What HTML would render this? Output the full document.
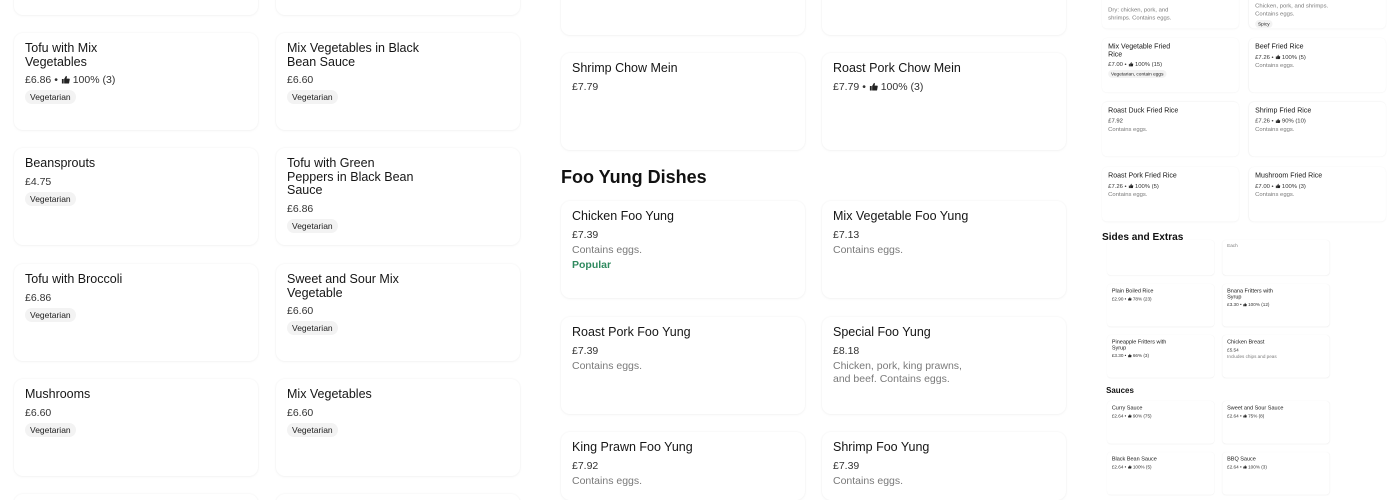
<!DOCTYPE html>
<html><head><meta charset="utf-8"><style>
*{margin:0;padding:0;box-sizing:border-box}
html{width:1400px;height:500px;overflow:hidden}
body{width:1400px;height:500px;overflow:hidden;background:#fff;font-family:"Liberation Sans",Arial,sans-serif;color:#141414;position:relative}
.c{position:absolute;width:244px;height:97px;border-radius:9px;background:#fff;box-shadow:0 0 2px rgba(0,0,0,.06),0 1px 3px rgba(0,0,0,.03);padding:9px 11px}
.t{font-size:12.5px;line-height:13.5px;white-space:nowrap;color:#161616}
.p{font-size:10.5px;line-height:12px;margin-top:5px;color:#333;white-space:nowrap}
.d{font-size:10.5px;line-height:13.5px;margin-top:3px;color:#7a7a7a;white-space:nowrap}
.pop{font-size:10.5px;line-height:13px;margin-top:2px;color:#2f8a5f;font-weight:bold}
.tag{display:inline-block;background:#f3f3f3;font-size:8.5px;line-height:10px;padding:2px 5px;border-radius:8px;margin-top:4px;color:#222}
.h{position:absolute;font-size:18px;font-weight:bold;color:#111;white-space:nowrap}
.th{display:inline-block;width:9px;height:9px;vertical-align:-1px}
.s1{position:absolute;left:1102px;top:38px;width:520px;height:400px;transform:scale(.561);transform-origin:0 0;z-index:2}
.s2{position:absolute;left:1107px;top:284px;width:520px;height:480px;transform:scale(.44);transform-origin:0 0;z-index:1}
</style></head><body>
<svg width="0" height="0" style="position:absolute"><defs><symbol id="up" viewBox="0 0 10 10"><path d="M1 4.5h2v5H1zM3.5 4.5L5.5 1c1 0 1.2.8 1 1.6L6.2 4H9c.5 0 .8.4.7.9L9 9c-.1.3-.4.5-.7.5H3.5z" fill="#222"/></symbol></defs></svg>

<!-- LEFT -->
<div class="c" style="left:14px;top:-82px"></div>
<div class="c" style="left:276px;top:-82px"></div>
<div class="c" style="left:14px;top:33px"><div class="t">Tofu with Mix<br>Vegetables</div><div class="p">£6.86 • <svg class="th"><use href="#up"/></svg> 100% (3)</div><div class="tag">Vegetarian</div></div>
<div class="c" style="left:276px;top:33px"><div class="t">Mix Vegetables in Black<br>Bean Sauce</div><div class="p">£6.60</div><div class="tag">Vegetarian</div></div>
<div class="c" style="left:14px;top:148px"><div class="t">Beansprouts</div><div class="p">£4.75</div><div class="tag">Vegetarian</div></div>
<div class="c" style="left:276px;top:148px"><div class="t">Tofu with Green<br>Peppers in Black Bean<br>Sauce</div><div class="p">£6.86</div><div class="tag">Vegetarian</div></div>
<div class="c" style="left:14px;top:264px"><div class="t">Tofu with Broccoli</div><div class="p">£6.86</div><div class="tag">Vegetarian</div></div>
<div class="c" style="left:276px;top:264px"><div class="t">Sweet and Sour Mix<br>Vegetable</div><div class="p">£6.60</div><div class="tag">Vegetarian</div></div>
<div class="c" style="left:14px;top:379px"><div class="t">Mushrooms</div><div class="p">£6.60</div><div class="tag">Vegetarian</div></div>
<div class="c" style="left:276px;top:379px"><div class="t">Mix Vegetables</div><div class="p">£6.60</div><div class="tag">Vegetarian</div></div>
<div class="c" style="left:14px;top:494px;height:6px"></div>
<div class="c" style="left:276px;top:494px;height:6px"></div>

<!-- MIDDLE -->
<div class="c" style="left:561px;top:-62px"></div>
<div class="c" style="left:822px;top:-62px"></div>
<div class="c" style="left:561px;top:53px"><div class="t">Shrimp Chow Mein</div><div class="p">£7.79</div></div>
<div class="c" style="left:822px;top:53px"><div class="t">Roast Pork Chow Mein</div><div class="p">£7.79 • <svg class="th"><use href="#up"/></svg> 100% (3)</div></div>
<div class="h" style="left:561px;top:167px">Foo Yung Dishes</div>
<div class="c" style="left:561px;top:201px"><div class="t">Chicken Foo Yung</div><div class="p">£7.39</div><div class="d">Contains eggs.</div><div class="pop">Popular</div></div>
<div class="c" style="left:822px;top:201px"><div class="t">Mix Vegetable Foo Yung</div><div class="p">£7.13</div><div class="d">Contains eggs.</div></div>
<div class="c" style="left:561px;top:317px"><div class="t">Roast Pork Foo Yung</div><div class="p">£7.39</div><div class="d">Contains eggs.</div></div>
<div class="c" style="left:822px;top:317px"><div class="t">Special Foo Yung</div><div class="p">£8.18</div><div class="d">Chicken, pork, king prawns,<br>and beef. Contains eggs.</div></div>
<div class="c" style="left:561px;top:432px;height:68px"><div class="t">King Prawn Foo Yung</div><div class="p">£7.92</div><div class="d">Contains eggs.</div></div>
<div class="c" style="left:822px;top:432px;height:68px"><div class="t">Shrimp Foo Yung</div><div class="p">£7.39</div><div class="d">Contains eggs.</div></div>

<!-- RIGHT upper (scaled) -->
<div class="s1">
<div class="c" style="left:0;top:-114px;padding-top:55px"><div class="d">Dry: chicken, pork, and<br>shrimps. Contains eggs.</div></div>
<div class="c" style="left:262px;top:-114px;padding-top:48px"><div class="d">Chicken, pork, and shrimps.<br>Contains eggs.</div><div class="tag">Spicy</div></div>
<div class="c" style="left:0;top:0"><div class="t">Mix Vegetable Fried<br>Rice</div><div class="p">£7.00 • <svg class="th"><use href="#up"/></svg> 100% (15)</div><div class="tag">Vegetarian, contain eggs</div></div>
<div class="c" style="left:262px;top:0"><div class="t">Beef Fried Rice</div><div class="p">£7.26 • <svg class="th"><use href="#up"/></svg> 100% (5)</div><div class="d">Contains eggs.</div></div>
<div class="c" style="left:0;top:114px"><div class="t">Roast Duck Fried Rice</div><div class="p">£7.92</div><div class="d">Contains eggs.</div></div>
<div class="c" style="left:262px;top:114px"><div class="t">Shrimp Fried Rice</div><div class="p">£7.26 • <svg class="th"><use href="#up"/></svg> 90% (10)</div><div class="d">Contains eggs.</div></div>
<div class="c" style="left:0;top:230px"><div class="t">Roast Pork Fried Rice</div><div class="p">£7.26 • <svg class="th"><use href="#up"/></svg> 100% (5)</div><div class="d">Contains eggs.</div></div>
<div class="c" style="left:262px;top:230px"><div class="t">Mushroom Fried Rice</div><div class="p">£7.00 • <svg class="th"><use href="#up"/></svg> 100% (3)</div><div class="d">Contains eggs.</div></div>
<div class="h" style="left:0;top:344px;background:#fff;padding-right:4px">Sides and Extras</div>
</div>

<!-- RIGHT lower (scaled) -->
<div class="s2">
<div class="c" style="left:0;top:-100px;height:80px"></div>
<div class="c" style="left:262px;top:-100px;height:80px;padding-top:4px"><div class="d">Each</div></div>
<div class="c" style="left:0;top:0"><div class="t">Plain Boiled Rice</div><div class="p">£2.90 • <svg class="th"><use href="#up"/></svg> 78% (23)</div></div>
<div class="c" style="left:262px;top:0"><div class="t">Bnana Fritters with<br>Syrup</div><div class="p">£3.30 • <svg class="th"><use href="#up"/></svg> 100% (12)</div></div>
<div class="c" style="left:0;top:116px"><div class="t">Pineapple Fritters with<br>Syrup</div><div class="p">£3.30 • <svg class="th"><use href="#up"/></svg> 66% (3)</div></div>
<div class="c" style="left:262px;top:116px"><div class="t">Chicken Breast</div><div class="p">£5.54</div><div class="d">Includes chips and peas</div></div>
<div class="h" style="left:-2px;top:232px">Sauces</div>
<div class="c" style="left:0;top:266px"><div class="t">Curry Sauce</div><div class="p">£2.64 • <svg class="th"><use href="#up"/></svg> 90% (75)</div></div>
<div class="c" style="left:262px;top:266px"><div class="t">Sweet and Sour Sauce</div><div class="p">£2.64 • <svg class="th"><use href="#up"/></svg> 75% (8)</div></div>
<div class="c" style="left:0;top:382px"><div class="t">Black Bean Sauce</div><div class="p">£2.64 • <svg class="th"><use href="#up"/></svg> 100% (5)</div></div>
<div class="c" style="left:262px;top:382px"><div class="t">BBQ Sauce</div><div class="p">£2.64 • <svg class="th"><use href="#up"/></svg> 100% (3)</div></div>
</div>
</body></html>
